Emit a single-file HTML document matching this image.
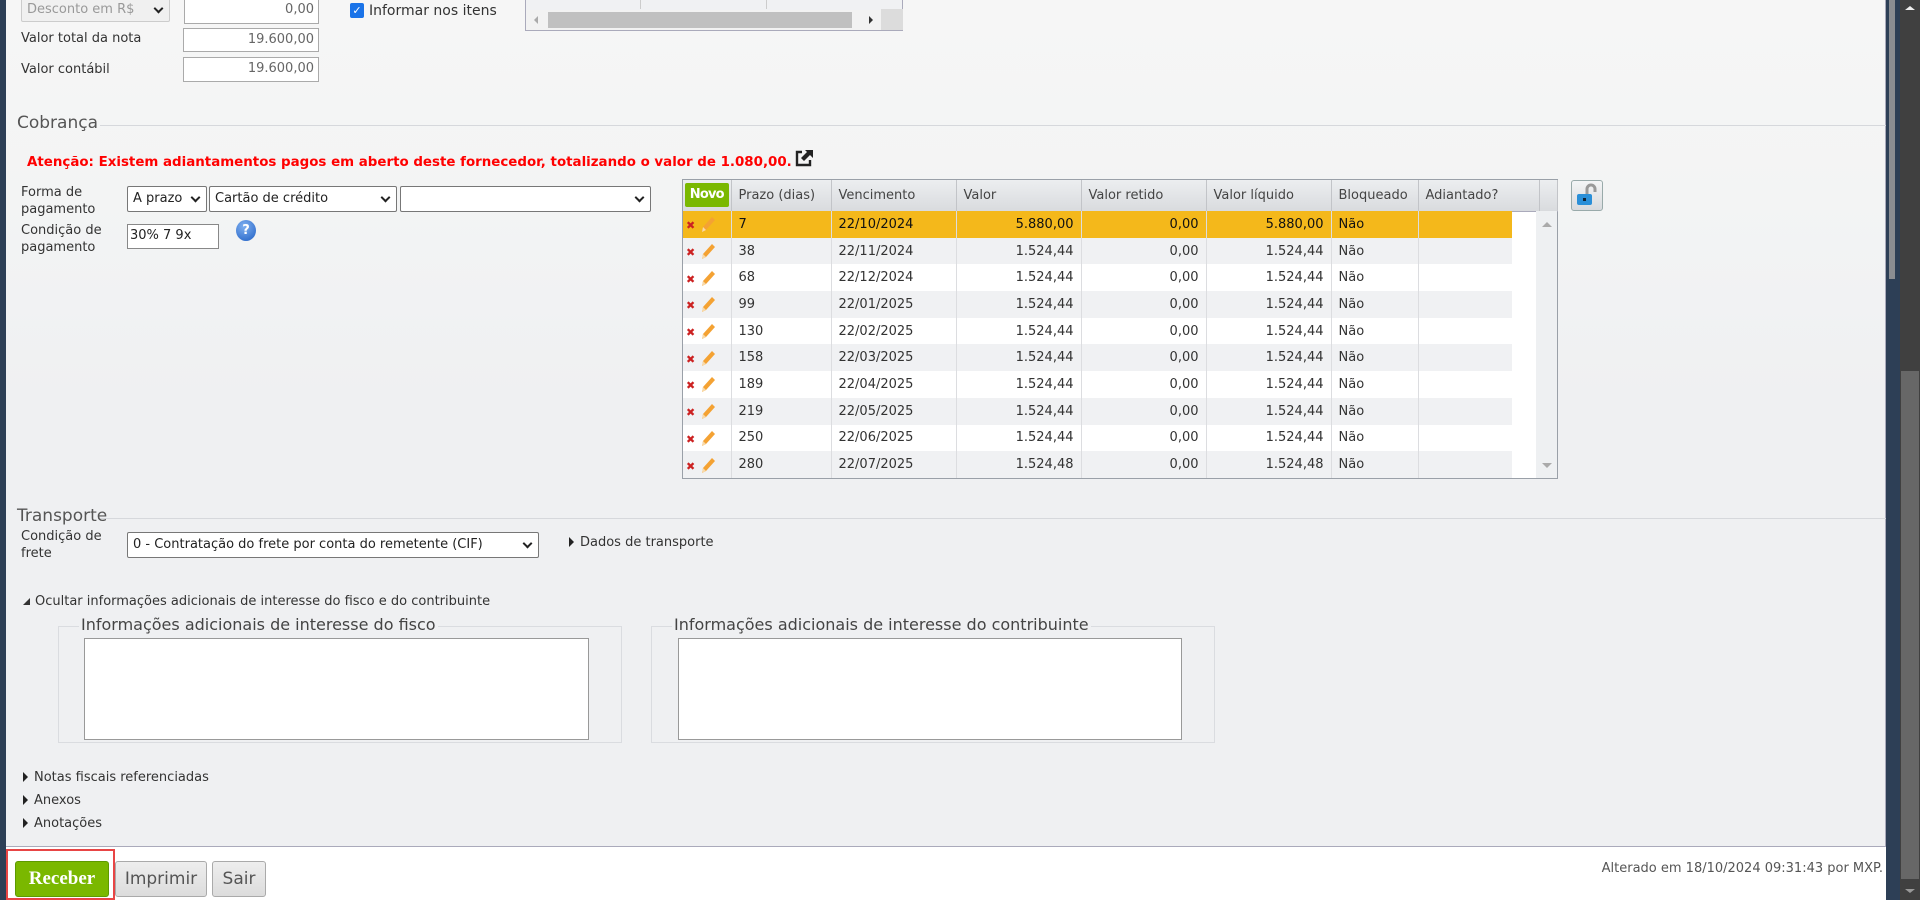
<!DOCTYPE html>
<html><head><meta charset="utf-8"><style>
*{box-sizing:border-box;margin:0;padding:0}
body{width:1920px;height:900px;overflow:hidden;background:#2d3f56;font-family:"DejaVu Sans",Verdana,sans-serif;font-size:13px;color:#333;position:relative}
.a{position:absolute}
#panel{left:6px;top:0;width:1880px;height:847px;background:linear-gradient(#f6f6f6 0,#f3f4f4 200px,#eff0f2 400px,#eff0f2);border-right:1px solid #aab;border-bottom:1px solid #aab}
#foot{left:6px;top:847px;width:1880px;height:53px;background:#fff}
.inp{position:absolute;background:#fff;border:1px solid #aaa;color:#666;padding:0 4px;line-height:22px;text-align:right}
.sel{position:absolute;background:#fff;border:1px solid #777;border-radius:2px;color:#222;padding-left:5px;line-height:23px;white-space:nowrap}
.sel:after{content:"";position:absolute;right:7px;top:7px;width:5px;height:5px;border-right:2px solid #222;border-bottom:2px solid #222;transform:rotate(45deg)}
.leg{position:absolute;font-size:17px;color:#555}
.hl{position:absolute;height:1px;background:#d6d8dc}
.tri{display:inline-block;width:0;height:0;border-top:5px solid transparent;border-bottom:5px solid transparent;border-left:5px solid #222;margin-right:6px;vertical-align:-1px}
table{border-collapse:collapse;font-size:13px;table-layout:fixed}
td{height:26.7px;padding:0 7px;border-right:1px solid #dcdde0;white-space:nowrap;overflow:hidden}
th{height:31px;font-weight:normal;text-align:left;padding:0 7px;color:#444;border-right:1px solid #c2c4c8;border-bottom:1px solid #aab;white-space:nowrap;overflow:hidden}
.r{text-align:right}
.x{color:#c22;font-weight:bold;font-size:11px}
.btn{position:absolute;top:861px;height:36px;border:1px solid #aaa;border-radius:3px;background:linear-gradient(#eee,#dcdcdc);color:#555;font-size:17px;text-align:center;line-height:34px}
.ta{position:absolute;background:#fff;border:1px solid #999}
.fs{position:absolute;border:1px solid #dadce0}
.fs span{position:absolute;top:-12px;left:20px;background:#eff0f2;padding:0 2px;font-size:16px;color:#444;white-space:nowrap}
</style></head><body>
<svg width="0" height="0" style="position:absolute"><defs><g id="pen"><path d="M3 17l1-5L13 2l3 3-9 10z" fill="#f4a233"/><path d="M3 17l1-5 3 3z" fill="#f8d9a8"/></g></defs></svg>
<div class="a" id="panel"></div>
<div class="a" id="foot"></div>
<div class="a" style="left:1889px;top:0;width:6px;height:279px;background:#8a8d92"></div>
<div class="a" style="left:1900px;top:0;width:20px;height:900px;background:#404040"></div>
<div class="a" style="left:1901px;top:371px;width:18px;height:508px;background:#676767"></div>
<div class="a" style="left:1905px;top:6px;border-left:5px solid transparent;border-right:5px solid transparent;border-bottom:4px solid #eee"></div>
<div class="a" style="left:1905px;top:889px;border-left:5px solid transparent;border-right:5px solid transparent;border-top:4px solid #999"></div>

<div class="sel" style="left:21px;top:-3px;width:149px;height:25px;border-color:#ccc;color:#999;background:#f0f0f0">Desconto em R$</div>
<div class="inp" style="left:184px;top:-2px;width:135px;height:26px">0,00</div>
<div class="a" style="left:21px;top:31px">Valor total da nota</div>
<div class="inp" style="left:183px;top:28px;width:136px;height:24px">19.600,00</div>
<div class="a" style="left:21px;top:62px">Valor contábil</div>
<div class="inp" style="left:183px;top:57px;width:136px;height:25px">19.600,00</div>
<div class="a" style="left:350px;top:3px;width:14px;height:15px;background:#1a73e8;border-radius:2px;color:#fff;font-size:11px;line-height:15px;text-align:center">✓</div>
<div class="a" style="left:369px;top:3px;font-size:14px">Informar nos itens</div>
<div class="a" style="left:525px;top:-1px;width:378px;height:32px;border:1px solid #aab;border-top:none;background:#f0f1f3">
 <div class="a" style="left:114px;top:0;width:1px;height:10px;background:#ccc"></div>
 <div class="a" style="left:240px;top:0;width:1px;height:10px;background:#ccc"></div>
 <div class="a" style="left:0;top:11px;width:355px;height:20px;background:#f2f2f2"></div>
 <div class="a" style="left:22px;top:13px;width:304px;height:16px;background:#c0c0c0"></div>
 <div class="a" style="left:8px;top:17px;border-top:4px solid transparent;border-bottom:4px solid transparent;border-right:4px solid #aaa"></div>
 <div class="a" style="left:343px;top:17px;border-top:4px solid transparent;border-bottom:4px solid transparent;border-left:4px solid #333"></div>
 <div class="a" style="left:355px;top:10px;width:22px;height:21px;background:#dcdcdc"></div>
</div>

<div class="hl" style="left:100px;top:125px;width:1786px"></div>
<div class="leg" style="left:17px;top:113px">Cobrança</div>
<div class="a" style="left:27px;top:149px;color:#f00;font-weight:bold;font-size:13.4px;white-space:nowrap">Atenção: Existem adiantamentos pagos em aberto deste fornecedor, totalizando o valor de 1.080,00.<svg style="vertical-align:-2px;margin-left:2px" width="20" height="19" viewBox="0 0 20 19"><path d="M8 3H3v13h13v-5" fill="none" stroke="#222" stroke-width="2.4"/><path d="M11 1h8v8l-3-3-6 6-3-3 6-6z" fill="#222"/></svg></div>

<div class="a" style="left:21px;top:184px;line-height:17px">Forma de<br>pagamento</div>
<div class="sel" style="left:127px;top:186px;width:80px;height:26px">A prazo</div>
<div class="sel" style="left:209px;top:186px;width:188px;height:26px">Cartão de crédito</div>
<div class="sel" style="left:400px;top:186px;width:251px;height:26px"></div>
<div class="a" style="left:21px;top:222px;line-height:17px">Condição de<br>pagamento</div>
<div class="inp" style="left:127px;top:224px;width:92px;height:25px;text-align:left;color:#222;border-color:#888;padding-left:2px">30% 7 9x</div>
<div class="a" style="left:236px;top:220px;width:20px;height:21px;border-radius:50%;background:radial-gradient(circle at 40% 30%,#7fb0f0,#1f5fc4);color:#fff;font-weight:bold;font-size:13px;text-align:center;line-height:21px">?</div>

<div class="a" style="left:682px;top:179px;width:876px;height:300px;border:1px solid #9aa0a8;background:#fff">
<table style="position:absolute;left:0;top:0;width:874px">
<colgroup><col style="width:48px"><col style="width:100px"><col style="width:125px"><col style="width:125px"><col style="width:125px"><col style="width:125px"><col style="width:87px"><col style="width:121px"><col style="width:18px"></colgroup>
<tr style="background:linear-gradient(#eceef0,#d9dbde)">
<th style="padding:0 2px"><div style="background:#7ab800;color:#fff;font-weight:bold;height:24px;line-height:24px;text-align:center;border-radius:2px;font-size:13px;letter-spacing:-0.8px">Novo</div></th>
<th>Prazo (dias)</th><th>Vencimento</th><th>Valor</th><th>Valor retido</th><th>Valor líquido</th><th>Bloqueado</th><th>Adiantado?</th><th style="padding:0"></th></tr>
</table>
<div class="a" style="left:0;top:31px;width:829px">
<table style="width:829px">
<colgroup><col style="width:48px"><col style="width:100px"><col style="width:125px"><col style="width:125px"><col style="width:125px"><col style="width:125px"><col style="width:87px"><col style="width:94px"></colgroup>
<tr style="background:#f4b81b;color:#111"><td style="padding:0 3px"><span class="x">✖</span> <svg width="18" height="18" viewBox="0 0 18 18" style="vertical-align:-4px"><use href="#pen"/></svg></td><td>7</td><td>22/10/2024</td><td class="r">5.880,00</td><td class="r">0,00</td><td class="r">5.880,00</td><td>Não</td><td style="border:none"></td></tr>
<tr style="background:#f0f1f3"><td style="padding:0 3px"><span class="x">✖</span> <svg width="18" height="18" viewBox="0 0 18 18" style="vertical-align:-4px"><use href="#pen"/></svg></td><td>38</td><td>22/11/2024</td><td class="r">1.524,44</td><td class="r">0,00</td><td class="r">1.524,44</td><td>Não</td><td style="border:none"></td></tr>
<tr><td style="padding:0 3px"><span class="x">✖</span> <svg width="18" height="18" viewBox="0 0 18 18" style="vertical-align:-4px"><use href="#pen"/></svg></td><td>68</td><td>22/12/2024</td><td class="r">1.524,44</td><td class="r">0,00</td><td class="r">1.524,44</td><td>Não</td><td style="border:none"></td></tr>
<tr style="background:#f0f1f3"><td style="padding:0 3px"><span class="x">✖</span> <svg width="18" height="18" viewBox="0 0 18 18" style="vertical-align:-4px"><use href="#pen"/></svg></td><td>99</td><td>22/01/2025</td><td class="r">1.524,44</td><td class="r">0,00</td><td class="r">1.524,44</td><td>Não</td><td style="border:none"></td></tr>
<tr><td style="padding:0 3px"><span class="x">✖</span> <svg width="18" height="18" viewBox="0 0 18 18" style="vertical-align:-4px"><use href="#pen"/></svg></td><td>130</td><td>22/02/2025</td><td class="r">1.524,44</td><td class="r">0,00</td><td class="r">1.524,44</td><td>Não</td><td style="border:none"></td></tr>
<tr style="background:#f0f1f3"><td style="padding:0 3px"><span class="x">✖</span> <svg width="18" height="18" viewBox="0 0 18 18" style="vertical-align:-4px"><use href="#pen"/></svg></td><td>158</td><td>22/03/2025</td><td class="r">1.524,44</td><td class="r">0,00</td><td class="r">1.524,44</td><td>Não</td><td style="border:none"></td></tr>
<tr><td style="padding:0 3px"><span class="x">✖</span> <svg width="18" height="18" viewBox="0 0 18 18" style="vertical-align:-4px"><use href="#pen"/></svg></td><td>189</td><td>22/04/2025</td><td class="r">1.524,44</td><td class="r">0,00</td><td class="r">1.524,44</td><td>Não</td><td style="border:none"></td></tr>
<tr style="background:#f0f1f3"><td style="padding:0 3px"><span class="x">✖</span> <svg width="18" height="18" viewBox="0 0 18 18" style="vertical-align:-4px"><use href="#pen"/></svg></td><td>219</td><td>22/05/2025</td><td class="r">1.524,44</td><td class="r">0,00</td><td class="r">1.524,44</td><td>Não</td><td style="border:none"></td></tr>
<tr><td style="padding:0 3px"><span class="x">✖</span> <svg width="18" height="18" viewBox="0 0 18 18" style="vertical-align:-4px"><use href="#pen"/></svg></td><td>250</td><td>22/06/2025</td><td class="r">1.524,44</td><td class="r">0,00</td><td class="r">1.524,44</td><td>Não</td><td style="border:none"></td></tr>
<tr style="background:#f0f1f3"><td style="padding:0 3px"><span class="x">✖</span> <svg width="18" height="18" viewBox="0 0 18 18" style="vertical-align:-4px"><use href="#pen"/></svg></td><td>280</td><td>22/07/2025</td><td class="r">1.524,48</td><td class="r">0,00</td><td class="r">1.524,48</td><td>Não</td><td style="border:none"></td></tr>
</table></div>
<div class="a" style="left:853px;top:31px;width:21px;height:267px;background:#eef0f2"></div>
<div class="a" style="left:859px;top:42px;border-left:5px solid transparent;border-right:5px solid transparent;border-bottom:5px solid #aaa"></div>
<div class="a" style="left:859px;top:283px;border-left:5px solid transparent;border-right:5px solid transparent;border-top:5px solid #aaa"></div>
</div>
<div class="a" style="left:1571px;top:180px;width:32px;height:31px;border:1px solid #9aa;border-radius:3px;background:linear-gradient(#f4f5f6,#d8dadd)">
<svg width="30" height="29" viewBox="0 0 30 29"><path d="M15 14V8a4 4 0 0 1 8 0v3" fill="none" stroke="#999" stroke-width="3"/><rect x="5" y="13" width="15" height="11" rx="2" fill="#2a8fd8"/><rect x="11" y="17" width="3" height="3" fill="#123"/></svg></div>

<div class="hl" style="left:100px;top:518px;width:1786px"></div>
<div class="leg" style="left:17px;top:506px">Transporte</div>
<div class="a" style="left:21px;top:528px;line-height:17px">Condição de<br>frete</div>
<div class="sel" style="left:127px;top:532px;width:412px;height:26px">0 - Contratação do frete por conta do remetente (CIF)</div>
<div class="a" style="left:569px;top:535px"><span class="tri"></span>Dados de transporte</div>

<div class="a" style="left:23px;top:594px;white-space:nowrap"><span style="display:inline-block;width:0;height:0;border-left:7px solid transparent;border-bottom:7px solid #333;margin-right:5px;vertical-align:0"></span>Ocultar informações adicionais de interesse do fisco e do contribuinte</div>
<div class="fs" style="left:58px;top:626px;width:564px;height:117px"><span>Informações adicionais de interesse do fisco</span></div>
<div class="ta" style="left:84px;top:638px;width:505px;height:102px"></div>
<div class="fs" style="left:651px;top:626px;width:564px;height:117px"><span>Informações adicionais de interesse do contribuinte</span></div>
<div class="ta" style="left:678px;top:638px;width:504px;height:102px"></div>

<div class="a" style="left:23px;top:770px"><span class="tri"></span>Notas fiscais referenciadas</div>
<div class="a" style="left:23px;top:793px"><span class="tri"></span>Anexos</div>
<div class="a" style="left:23px;top:816px"><span class="tri"></span>Anotações</div>

<div class="a" style="left:6px;top:849px;width:109px;height:51px;border:2px solid #e84545"></div>
<div class="btn" style="left:15px;width:94px;background:#7ab800;border-color:#5d9a00;color:#fff;font-weight:bold;font-family:'Liberation Serif',serif;font-size:19px">Receber</div>
<div class="btn" style="left:115px;width:92px">Imprimir</div>
<div class="btn" style="left:212px;width:54px">Sair</div>
<div class="a" style="left:1480px;top:861px;width:403px;text-align:right;color:#555;white-space:nowrap">Alterado em 18/10/2024 09:31:43 por MXP.</div>
</body></html>
